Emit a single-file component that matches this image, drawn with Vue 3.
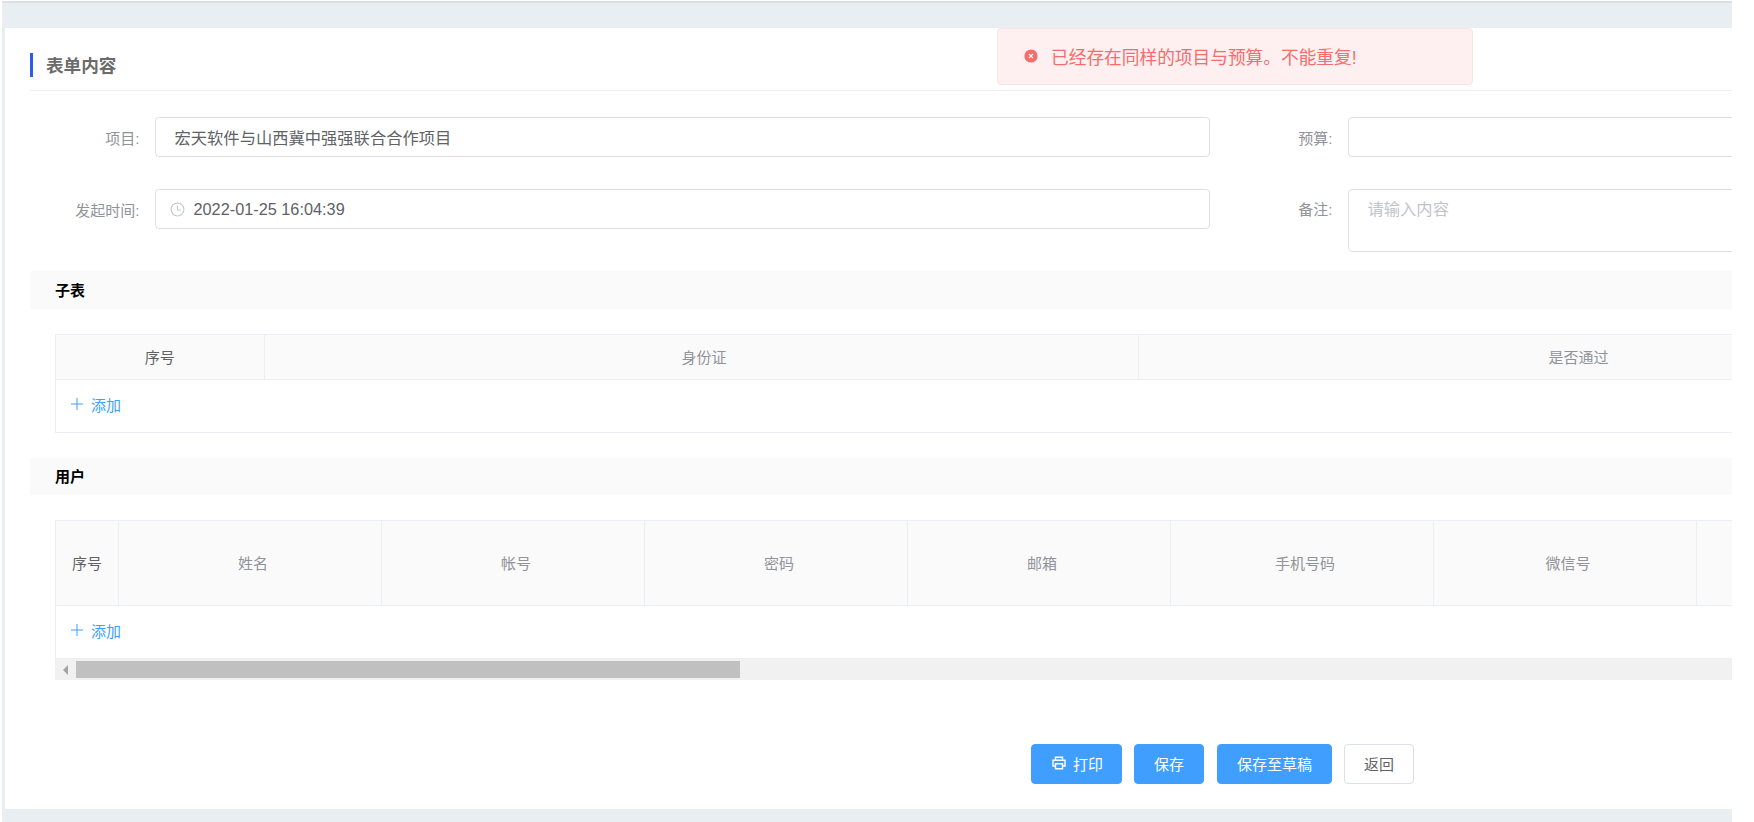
<script setup>
const subColumns = [
  { label: '序号', width: 208.5, dark: true },
  { label: '身份证', width: 874, shifted: true },
  { label: '是否通过', width: 881 }
]
const userColumns = ['姓名', '帐号', '密码', '邮箱', '手机号码', '微信号', '']
</script>

<template>
  <div class="page">
    <main class="card">
      <header class="title"><span class="title-bar"></span><h1>表单内容</h1></header>

      <div class="alert">
        <svg class="alert-icon" viewBox="0 0 14 14"><circle cx="7" cy="7" r="6.6" fill="#f56c6c"/><path d="M5 5l4 4M9 5l-4 4" stroke="#fff" stroke-width="1.1" fill="none"/></svg>
        <span>已经存在同样的项目与预算。不能重复!</span>
      </div>

      <section class="form">
        <div class="form-col form-left">
          <div class="field">
            <label>项目:</label>
            <div class="input input-text">宏天软件与山西冀中强强联合合作项目</div>
          </div>
          <div class="field">
            <label>发起时间:</label>
            <div class="input input-date">
              <svg class="clock" viewBox="0 0 14 14" fill="none" stroke="#c0c4cc" stroke-width="1"><circle cx="7" cy="7" r="6"/><path d="M7 3.4V7.4H10"/></svg>
              <span>2022-01-25 16:04:39</span>
            </div>
          </div>
        </div>
        <div class="form-col form-right">
          <div class="field">
            <label>预算:</label>
            <div class="input input-wide"></div>
          </div>
          <div class="field field-top">
            <label>备注:</label>
            <div class="input textarea">请输入内容</div>
          </div>
        </div>
      </section>

      <div class="section-head sub-head">子表</div>
      <div class="table sub-table">
        <div class="thead">
          <div v-for="c in subColumns" :key="c.label" class="th" :class="{ dark: c.dark, shifted: c.shifted }" :style="{ width: c.width + 'px' }">{{ c.label }}</div>
        </div>
        <div class="add-row sub-add">
          <svg class="plus" viewBox="0 0 12 12"><path d="M6 0V12M0 6H12" stroke="#409eff" stroke-width="1" fill="none"/></svg>
          <span>添加</span>
        </div>
      </div>

      <div class="section-head user-head">用户</div>
      <div class="table user-table">
        <div class="thead user-thead">
          <div class="th dark index-col">序号</div>
          <div v-for="c in userColumns" :key="c" class="th user-col shifted">{{ c }}</div>
        </div>
        <div class="add-row user-add">
          <svg class="plus" viewBox="0 0 12 12"><path d="M6 0V12M0 6H12" stroke="#409eff" stroke-width="1" fill="none"/></svg>
          <span>添加</span>
        </div>
      </div>
      <div class="scrollbar">
        <span class="arrow"></span>
        <span class="thumb"></span>
      </div>

      <footer class="actions">
        <button class="btn primary print-btn">
          <svg class="printer" viewBox="0 0 14 14" fill="none" stroke="#fff" stroke-width="1.4"><path d="M3.5 4V1.2H10.5V4"/><path d="M3.5 10H1V4.2H13V10H10.5"/><path d="M3.5 7.8H10.5V12.8H3.5Z"/></svg>
          <span>打印</span>
        </button>
        <button class="btn primary save-btn">保存</button>
        <button class="btn primary draft-btn">保存至草稿</button>
        <button class="btn back-btn">返回</button>
      </footer>
    </main>
  </div>
</template>

<style>
html, body { margin: 0; background: #fff; overflow: hidden; }
</style>

<style scoped>
.page {
  box-sizing: border-box;
  margin: 1px 22px 0 2px;
  height: 821px;
  padding: 25px 0 13px 3px;
  background: #e9eef3;
  border-top: 2px solid #dcdfe6;
  overflow: hidden;
  font-family: "Liberation Sans", "Noto Sans CJK SC", sans-serif;
}
.card {
  position: relative;
  box-sizing: border-box;
  height: 781px;
  padding: 25px 0 0 25px;
  background: #fff;
  overflow: hidden;
}
.title {
  display: flex;
  align-items: flex-start;
  height: 38px;
  box-sizing: border-box;
  border-bottom: 1px solid #ebeef5;
}
.title-bar { width: 3px; height: 24px; background: #2f5cf0; }
.title h1 { margin: 0 0 0 13px; font-size: 17.6px; line-height: 26px; font-weight: 700; color: #6b6b6b; }

.alert {
  position: absolute;
  left: 992px;
  top: 0;
  box-sizing: border-box;
  display: flex;
  align-items: center;
  width: 476px;
  height: 57px;
  padding: 0 0 2px 26px;
  background: #fef0f0;
  border: 1px solid #fde2e2;
  border-radius: 4px;
  color: #f56c6c;
  font-size: 17.7px;
}
.alert-icon { width: 14px; height: 14px; margin-right: 13px; }

.form { display: flex; padding-top: 26px; height: 180px; box-sizing: border-box; }
.form-col { display: flex; flex-direction: column; gap: 32px; }
.form-left { width: 1179.5px; }
.form-right { flex: 1; }
.field { display: flex; align-items: center; }
.field-top { align-items: flex-start; }
.field label {
  flex: none;
  width: 109.5px;
  text-align: right;
  font-size: 15px;
  color: #909399;
}
.form-right label { width: 123px; }
.field-top label { line-height: 42px; }
.input {
  box-sizing: border-box;
  height: 40px;
  border: 1px solid #dcdfe6;
  border-radius: 4px;
  margin-left: 15px;
  color: #606266;
  font-size: 16.3px;
  display: flex;
  align-items: center;
}
.input-text, .input-date { width: 1055px; }
.input-text { padding-left: 19px; }
.input-date { padding-left: 14px; }
.input-wide, .textarea { width: 470px; }
.clock { width: 15px; height: 15px; margin-right: 9px; }
.textarea {
  height: 63px;
  align-items: flex-start;
  padding: 8px 19px;
  line-height: 22px;
  color: #c0c4cc;
}

.section-head {
  box-sizing: border-box;
  padding: 0 0 2px 25px;
  background: #fafafa;
  color: #000;
  font-size: 15px;
  font-weight: 700;
  display: flex;
  align-items: center;
}
.sub-head { height: 38px; }
.user-head { height: 37px; margin-top: 25px; }

.table {
  box-sizing: border-box;
  margin: 25px 0 0 25px;
  border: 1px solid #ebeef5;
  border-right: 0;
  overflow: hidden;
}
.sub-table { height: 99px; }
.user-table { height: 139px; }
.thead {
  display: flex;
  height: 44px;
  background: #fafafa;
  border-bottom: 1px solid #ebeef5;
}
.user-thead { height: 84px; }
.th {
  flex: none;
  box-sizing: border-box;
  display: flex;
  align-items: center;
  justify-content: center;
  padding-bottom: 2px;
  border-right: 1px solid #ebeef5;
  color: #909399;
  font-size: 15px;
}
.th.dark { color: #606266; }
.th.shifted { padding-left: 6px; }
.index-col { width: 63px; }
.user-col { width: 263px; }
.add-row {
  display: flex;
  align-items: center;
  padding: 0 0 4px 15px;
  color: #409eff;
  font-size: 15px;
  box-sizing: border-box;
}
.sub-add { height: 52px; }
.user-add { height: 52px; }
.plus { width: 12px; height: 12px; margin-right: 8px; }

.scrollbar {
  position: relative;
  height: 21px;
  margin-left: 25px;
  background: #f1f1f1;
}
.arrow {
  position: absolute;
  left: 8px;
  top: 6px;
  border-style: solid;
  border-width: 5px 5px 5px 0;
  border-color: transparent #a3a3a3 transparent transparent;
}
.thumb {
  position: absolute;
  left: 21px;
  top: 2px;
  width: 664px;
  height: 17px;
  background: #c0c0c0;
}

.actions {
  display: flex;
  gap: 12px;
  margin-top: 64px;
  padding-left: 1001px;
}
.btn {
  box-sizing: border-box;
  height: 40px;
  padding: 0 0 2px;
  border: 1px solid #dcdfe6;
  border-radius: 4px;
  background: #fff;
  color: #606266;
  font-family: inherit;
  font-size: 15px;
  display: flex;
  align-items: center;
  justify-content: center;
}
.primary { background: #409eff; border-color: #409eff; color: #fff; }
.print-btn { width: 91px; padding-left: 2px; }
.save-btn { width: 70px; }
.draft-btn { width: 115px; margin-left: 1px; }
.back-btn { width: 70px; }
.printer { width: 14px; height: 14px; margin-right: 7px; }
</style>
